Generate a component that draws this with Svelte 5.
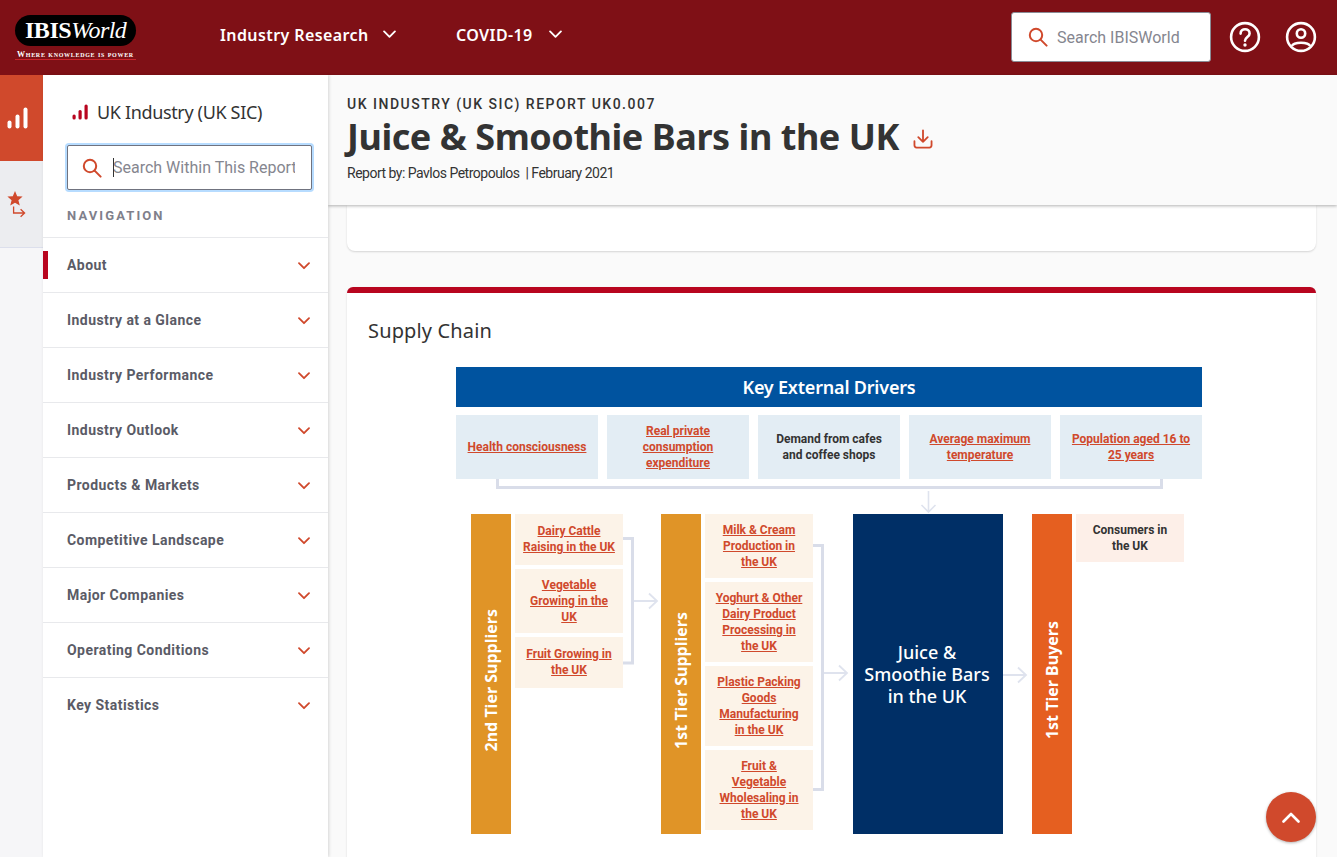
<script lang="ts">
    const navItems = [
        "About",
        "Industry at a Glance",
        "Industry Performance",
        "Industry Outlook",
        "Products & Markets",
        "Competitive Landscape",
        "Major Companies",
        "Operating Conditions",
        "Key Statistics",
    ];

    const drivers = [
        { label: "Health consciousness", link: true },
        { label: "Real private consumption expenditure", link: true },
        { label: "Demand from cafes and coffee shops", link: false },
        { label: "Average maximum temperature", link: true },
        { label: "Population aged 16 to 25 years", link: true },
    ];

    const secondTier = [
        { label: "Dairy Cattle Raising in the UK", height: 51 },
        { label: "Vegetable Growing in the UK", height: 64 },
        { label: "Fruit Growing in the UK", height: 51 },
    ];

    const firstTier = [
        { label: "Milk & Cream Production in the UK", height: 64 },
        { label: "Yoghurt & Other Dairy Product Processing in the UK", height: 80 },
        { label: "Plastic Packing Goods Manufacturing in the UK", height: 80 },
        { label: "Fruit & Vegetable Wholesaling in the UK", height: 80 },
    ];
</script>

{#snippet searchIcon()}
    <svg class="search-icon" viewBox="0 0 20 20" width="20" height="20" fill="none" stroke="#d0492c" stroke-width="2" stroke-linecap="round">
        <circle cx="8" cy="8" r="6.2" />
        <path d="M12.6 12.6 L18.6 18.6" />
    </svg>
{/snippet}

{#snippet chevron()}
    <svg class="chevron" viewBox="0 0 12 8" width="12" height="8" fill="none" stroke="#d0492c" stroke-width="1.8" stroke-linecap="round" stroke-linejoin="round">
        <path d="M1 1.2 L6 6.2 L11 1.2" />
    </svg>
{/snippet}

{#snippet whiteChevron()}
    <svg viewBox="0 0 12 8" width="13" height="9" fill="none" stroke="#fff" stroke-width="1.7" stroke-linecap="round" stroke-linejoin="round">
        <path d="M1 1.2 L6 6.2 L11 1.2" />
    </svg>
{/snippet}

<div class="page">
    <header class="topbar">
        <div class="logo">
            <div class="logo-pill"><b>IBIS</b><i>World</i></div>
            <div class="logo-tag">Where knowledge is power</div>
        </div>
        <nav class="topnav">
            <span class="topnav-item research">Industry Research {@render whiteChevron()}</span>
            <span class="topnav-item">COVID-19 {@render whiteChevron()}</span>
        </nav>
        <div class="top-search">
            {@render searchIcon()}
            <span>Search IBISWorld</span>
        </div>
        <svg class="top-icon help" viewBox="0 0 32 32" width="32" height="32" fill="none" stroke="#fff" stroke-width="2.6">
            <circle cx="16" cy="16" r="13.9" />
            <path d="M11.6 12.6 C11.6 6.8 20.6 7 20.6 12.4 C20.6 16 16 16 16 19.8" stroke-linecap="round" />
            <circle cx="16" cy="24" r="1.7" fill="#fff" stroke="none" />
        </svg>
        <svg class="top-icon" viewBox="0 0 32 32" width="32" height="32" fill="none" stroke="#fff" stroke-width="2.6">
            <circle cx="16" cy="16" r="13.9" />
            <circle cx="16" cy="12.5" r="4.2" />
            <path d="M6.8 25 C9 20.6 23 20.6 25.2 25" />
        </svg>
    </header>

    <div class="body">
        <aside class="rail">
            <div class="rail-item active">
                <svg viewBox="0 0 22 22" width="22" height="22" fill="#fff">
                    <rect x="0.5" y="13.5" width="4" height="8" rx="2" />
                    <rect x="8.5" y="7.5" width="4" height="14" rx="2" />
                    <rect x="16.5" y="0.5" width="4" height="21" rx="2" />
                </svg>
            </div>
            <div class="rail-item">
                <svg viewBox="0 0 20 28" width="20" height="28">
                    <path d="M8 1 L10.2 6.2 L15.6 6.6 L11.4 10.2 L12.8 15.6 L8 12.7 L3.2 15.6 L4.6 10.2 L0.4 6.6 L5.8 6.2 Z" fill="#d0492c" />
                    <path d="M6.6 16.5 V23 H17.5 M13.6 19.2 L17.6 23 L13.6 26.8" fill="none" stroke="#d0492c" stroke-width="1.3" />
                </svg>
            </div>
        </aside>

        <aside class="sidebar">
            <div class="side-title">
                <svg viewBox="0 0 16 16" width="16" height="16" fill="#b8051f">
                    <rect x="0.5" y="10.5" width="3.2" height="5" rx="1.5" />
                    <rect x="6.5" y="6" width="3.2" height="9.5" rx="1.5" />
                    <rect x="12.5" y="0.5" width="3.2" height="15" rx="1.5" />
                </svg>
                <span>UK Industry (UK SIC)</span>
            </div>
            <div class="side-search">
                {@render searchIcon()}
                <span class="caret"></span>
                <input type="text" placeholder="Search Within This Report" />
            </div>
            <div class="nav-label">NAVIGATION</div>
            <ul class="nav-list">
                {#each navItems as item, index (item)}
                    <li class:current={index === 0}>
                        <span>{item}</span>
                        {@render chevron()}
                    </li>
                {/each}
            </ul>
        </aside>

        <main class="main">
            <section class="report-head">
                <div class="eyebrow">UK INDUSTRY (UK SIC) REPORT UK0.007</div>
                <h1>
                    Juice &amp; Smoothie Bars in the UK
                    <svg viewBox="0 0 22 22" width="20" height="20" fill="none" stroke="#d0492c" stroke-width="2" stroke-linecap="round" stroke-linejoin="round">
                        <path d="M11 1.5 V14 M5.8 9 L11 14.2 L16.2 9" />
                        <path d="M1.6 13.5 V18 Q1.6 20.4 4 20.4 H18 Q20.4 20.4 20.4 18 V13.5" />
                    </svg>
                </h1>
                <div class="byline">Report by: Pavlos Petropoulos &nbsp;| February 2021</div>
            </section>

            <div class="content">
                <div class="prev-card"></div>
                <section class="card">
                    <h2>Supply Chain</h2>
                    <div class="diagram">
                        <div class="drivers-title">Key External Drivers</div>
                        <div class="drivers">
                            {#each drivers as d (d.label)}
                                <div class="driver">
                                    {#if d.link}<a href="#top">{d.label}</a>{:else}{d.label}{/if}
                                </div>
                            {/each}
                        </div>
                        <svg class="link-top" width="746" height="35" viewBox="0 0 746 35" fill="none" stroke="#d9dde9">
                            <path d="M41.5 0 V8.5 H705.5 V0" stroke-width="3" />
                            <path d="M472.5 12 V33 M465.5 26 L472.5 33 L479.5 26" stroke-width="1.6" stroke="#dfe3ee" />
                        </svg>

                        <div class="chain">
                            <div class="tier-bar amber"><span>2nd Tier Suppliers</span></div>
                            <div class="tier-boxes">
                                {#each secondTier as item (item.label)}
                                    <div class="tier-box" class:short={item.height === 51} style="height: {item.height}px"><a href="#top">{item.label}</a></div>
                                {/each}
                            </div>
                            <svg class="link" width="38" height="320" viewBox="0 0 38 320" fill="none" stroke="#d9dde9">
                                <path d="M0 24.5 H9.5 V149 H0" stroke-width="3" />
                                <path d="M11 87 H33 M26 79.5 L34 87 L26 94.5" stroke-width="1.8" stroke="#dfe3ee" />
                            </svg>
                            <div class="tier-bar amber"><span>1st Tier Suppliers</span></div>
                            <div class="tier-boxes">
                                {#each firstTier as item (item.label)}
                                    <div class="tier-box" style="height: {item.height}px"><a href="#top">{item.label}</a></div>
                                {/each}
                            </div>
                            <svg class="link" width="40" height="320" viewBox="0 0 40 320" fill="none" stroke="#d9dde9">
                                <path d="M0 31.5 H9.5 V275.5 H0" stroke-width="3" />
                                <path d="M11 159 H33 M26 151.5 L34 159 L26 166.5" stroke-width="1.8" stroke="#dfe3ee" />
                            </svg>
                            <div class="focus">Juice &amp; Smoothie Bars in the UK</div>
                            <svg class="link" width="29" height="320" viewBox="0 0 29 320" fill="none" stroke="#dfe3ee">
                                <path d="M0 161 H22 M15 153.5 L23 161 L15 168.5" stroke-width="1.8" />
                            </svg>
                            <div class="tier-bar orange"><span>1st Tier Buyers</span></div>
                            <div class="tier-boxes">
                                <div class="tier-box buyer">Consumers in the UK</div>
                            </div>
                        </div>
                    </div>
                </section>
            </div>
        </main>
    </div>

    <button class="to-top" aria-label="Back to top">
        <svg viewBox="0 0 18 11" width="18" height="11" fill="none" stroke="#fff" stroke-width="2.6" stroke-linecap="round" stroke-linejoin="round">
            <path d="M1.5 9.5 L9 2 L16.5 9.5" />
        </svg>
    </button>
</div>

<style>
    :global(body) {
        margin: 0;
        font-family: Roboto, sans-serif;
    }

    .page {
        width: 1337px;
        height: 857px;
        overflow: hidden;
        display: flex;
        flex-direction: column;
        position: relative;
    }

    /* top bar */
    .topbar {
        height: 75px;
        flex: none;
        background-color: #7f1016;
        display: flex;
        align-items: center;
        color: #fff;
    }

    .logo {
        width: 121px;
        margin-left: 15px;
        margin-top: -1px;
    }

    .logo-pill {
        height: 31px;
        background-color: #000;
        border-radius: 16px;
        display: flex;
        align-items: center;
        justify-content: center;
        font-family: "Liberation Serif", serif;
        font-size: 24px;
        line-height: 31px;
    }

    .logo-pill b {
        letter-spacing: -0.4px;
    }

    .logo-pill i {
        font-weight: 400;
        letter-spacing: -0.6px;
    }

    .logo-tag {
        margin-top: 4px;
        border-bottom: 1px solid #c9252c;
        font-family: "Liberation Serif", serif;
        font-variant: small-caps;
        font-weight: 700;
        font-size: 8px;
        line-height: 9px;
        letter-spacing: 0.7px;
        white-space: nowrap;
        text-align: center;
    }

    .topnav {
        display: flex;
        margin-left: 84px;
        margin-top: -6px;
    }

    .topnav-item {
        display: flex;
        align-items: center;
        gap: 16px;
        font-family: "Noto Sans", sans-serif;
        font-size: 16px;
        font-weight: 600;
        letter-spacing: 0.4px;
        white-space: nowrap;
    }

    .research {
        width: 236px;
        gap: 14px;
    }

    .top-search {
        margin-left: auto;
        margin-top: -1px;
        width: 198px;
        height: 48px;
        background-color: #fff;
        border: 1px solid #8a8c96;
        border-radius: 3px;
        display: flex;
        align-items: center;
        color: #85868f;
        font-size: 16px;
    }

    .top-search svg {
        margin-left: 16px;
        margin-right: 9px;
        flex: none;
    }

    .top-icon {
        margin-top: -1px;
        margin-left: 20px;
        margin-right: 20px;
        flex: none;
    }

    .top-icon.help {
        margin-left: 18px;
        margin-right: 4px;
    }

    .body {
        flex: 1;
        display: flex;
        min-height: 0;
    }

    /* left rail */
    .rail {
        width: 43px;
        flex: none;
        background-color: #f6f6f8;
    }

    .rail-item {
        height: 86px;
        padding-left: 7px;
        background-color: #ecedf0;
        border-bottom: 1px solid #dcdfec;
        display: flex;
        align-items: center;
    }

    .rail-item.active {
        background-color: #d0492c;
        border-bottom: none;
    }

    .rail-item.active svg {
        margin-top: -1px;
    }

    /* sidebar */
    .sidebar {
        width: 285px;
        flex: none;
        background-color: #fff;
        box-shadow: 1px 0 3px rgba(0, 0, 0, 0.15);
        position: relative;
        z-index: 2;
    }

    .side-title {
        display: flex;
        align-items: center;
        gap: 9px;
        margin: 24px 0 0 29px;
        height: 26px;
        font-family: "Noto Sans", sans-serif;
        font-size: 18px;
        letter-spacing: -0.35px;
        color: #333;
    }

    .side-search {
        position: relative;
        margin: 20px 0 0 24px;
        width: 243px;
        height: 43px;
        border: 1px solid #70737f;
        border-radius: 2px;
        box-shadow: 0 0 0 2px #b7dcff;
        display: flex;
        align-items: center;
        background-color: #fff;
    }

    .side-search svg {
        flex: none;
        margin-left: 14px;
    }

    .side-search input {
        width: 182px;
        margin-left: 11px;
        padding: 0;
        border: none;
        outline: none;
        background: transparent;
        font-family: Roboto, sans-serif;
        font-size: 16px;
    }

    .side-search input::placeholder {
        color: #85868f;
        opacity: 1;
    }

    .caret {
        position: absolute;
        left: 45px;
        top: 12px;
        width: 1px;
        height: 19px;
        background-color: #333;
    }

    .nav-label {
        margin: 18px 0 0 24px;
        height: 16px;
        line-height: 16px;
        font-size: 13px;
        font-weight: 700;
        letter-spacing: 2.1px;
        color: #7f808b;
    }

    .nav-list {
        list-style: none;
        margin: 13px 0 0;
        padding: 0;
    }

    .nav-list li {
        position: relative;
        height: 54px;
        border-top: 1px solid #e8e9ec;
        padding: 0 18px 0 24px;
        display: flex;
        align-items: center;
        justify-content: space-between;
        font-size: 14px;
        font-weight: 700;
        letter-spacing: 0.45px;
        color: #5a5b66;
    }

    .nav-list li.current::before {
        content: "";
        position: absolute;
        left: 0;
        top: 13px;
        width: 5px;
        height: 28px;
        background-color: #b8051f;
    }

    .nav-list .chevron {
        margin-top: 2px;
    }

    /* main */
    .main {
        flex: 1;
        min-width: 0;
        background-color: #fafafa;
        display: flex;
        flex-direction: column;
    }

    .report-head {
        height: 130px;
        flex: none;
        box-sizing: border-box;
        padding: 21px 19px 0;
        background-color: #fafafa;
        box-shadow: 0 1px 3px rgba(0, 0, 0, 0.3);
        position: relative;
        z-index: 1;
    }

    .eyebrow {
        font-size: 14px;
        line-height: 16px;
        font-weight: 500;
        letter-spacing: 1.5px;
        color: #333;
    }

    h1 {
        margin: 3px 0 0;
        display: flex;
        align-items: center;
        gap: 14px;
        font-family: "Noto Sans", sans-serif;
        font-size: 36px;
        line-height: 44px;
        font-weight: 700;
        letter-spacing: -0.45px;
        color: #333;
    }

    h1 svg {
        flex: none;
        margin-top: 4px;
    }

    .byline {
        margin-top: 5px;
        font-size: 14px;
        line-height: 18px;
        letter-spacing: -0.5px;
        color: #333;
    }

    .content {
        padding: 0 21px 0 19px;
    }

    .prev-card {
        height: 46px;
        background-color: #fff;
        border-radius: 0 0 8px 8px;
        box-shadow: 0 1px 2px rgba(0, 0, 0, 0.15);
    }

    .card {
        margin-top: 36px;
        height: 640px;
        background-color: #fff;
        border-top: 6px solid #b8051f;
        border-radius: 6px 6px 0 0;
        box-shadow: 0 1px 2px rgba(0, 0, 0, 0.15);
        overflow: hidden;
    }

    h2 {
        margin: 24px 0 22px 21px;
        font-family: "Noto Sans", sans-serif;
        font-size: 20px;
        line-height: 28px;
        font-weight: 400;
        letter-spacing: 0.15px;
        color: #333;
    }

    /* supply chain diagram */
    .diagram {
        width: 746px;
        margin-left: 109px;
    }

    .drivers-title {
        height: 40px;
        background-color: #00539f;
        color: #fff;
        text-align: center;
        font-family: "Noto Sans", sans-serif;
        font-size: 18px;
        font-weight: 600;
        letter-spacing: -0.2px;
        line-height: 41px;
    }

    .drivers {
        display: flex;
        justify-content: space-between;
        margin-top: 8px;
    }

    .driver {
        width: 142px;
        height: 64px;
        box-sizing: border-box;
        padding: 0 8px;
        background-color: #e3edf4;
        display: flex;
        align-items: center;
        justify-content: center;
        text-align: center;
        font-size: 12px;
        line-height: 16px;
        font-weight: 700;
        color: #333;
    }

    a {
        color: #d0492c;
        text-decoration: underline;
    }

    .link-top {
        display: block;
    }

    .chain {
        display: flex;
        align-items: flex-start;
        height: 320px;
        padding-left: 15px;
    }

    .link {
        flex: none;
        display: block;
    }

    .tier-bar {
        width: 40px;
        height: 320px;
        flex: none;
        box-sizing: border-box;
        padding-top: 12px;
        display: flex;
        align-items: center;
        justify-content: center;
        color: #fff;
        font-family: "Noto Sans", sans-serif;
        font-size: 16px;
        font-weight: 700;
        white-space: nowrap;
    }

    .tier-bar span {
        writing-mode: vertical-rl;
        transform: rotate(180deg);
    }

    .amber {
        background-color: #e09427;
    }

    .orange {
        background-color: #e55f20;
    }

    .tier-boxes {
        width: 108px;
        flex: none;
        margin-left: 4px;
        display: flex;
        flex-direction: column;
        gap: 4px;
    }

    .tier-box {
        box-sizing: border-box;
        padding: 0 8px;
        background-color: #fcf3e8;
        display: flex;
        align-items: center;
        justify-content: center;
        text-align: center;
        font-size: 12px;
        line-height: 16px;
        font-weight: 700;
    }

    .tier-box.short {
        padding-bottom: 1px;
    }

    .tier-box.buyer {
        height: 48px;
        background-color: #fdefe8;
        color: #333;
    }

    .focus {
        width: 150px;
        height: 320px;
        flex: none;
        box-sizing: border-box;
        padding: 0 9px 0 7px;
        background-color: #002f66;
        color: #fff;
        display: flex;
        align-items: center;
        justify-content: center;
        text-align: center;
        font-family: "Noto Sans", sans-serif;
        font-size: 18px;
        line-height: 22px;
        font-weight: 500;
    }

    .to-top {
        position: absolute;
        left: 1266px;
        top: 792px;
        width: 50px;
        height: 50px;
        padding: 0;
        border: none;
        border-radius: 50%;
        background-color: #d0492c;
        box-shadow: 0 1px 3px rgba(0, 0, 0, 0.3);
        display: flex;
        align-items: center;
        justify-content: center;
    }
</style>
